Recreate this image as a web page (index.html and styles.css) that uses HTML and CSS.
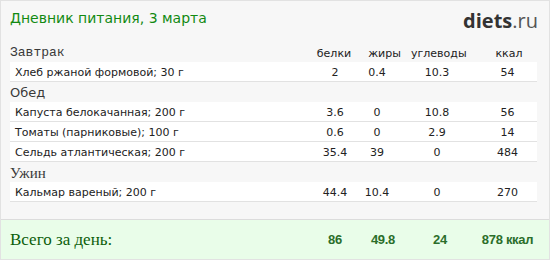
FILE: index.html
```html
<!DOCTYPE html>
<html lang="ru">
<head>
<meta charset="utf-8">
<title>Дневник питания</title>
<link rel="stylesheet" href="styles.css">
</head>
<body>
<div class="card">
  <div class="top">
    <h1 class="title">Дневник питания, 3 марта</h1>
    <div class="logo">diets<span class="logo-ru">.ru</span></div>
  </div>
  <div class="list">
    <div class="sec head">
      <span class="meal meal-b">Завтрак</span>
      <span class="ch">белки</span>
      <span class="ch">жиры</span>
      <span class="ch">углеводы</span>
      <span class="ch ch-k">ккал</span>
    </div>
    <div class="row"><span class="name">Хлеб ржаной формовой; 30 г</span><span>2</span><span>0.4</span><span>10.3</span><span>54</span></div>

    <div class="sec"><span class="meal meal-l">Обед</span></div>
    <div class="row"><span class="name">Капуста белокачанная; 200 г</span><span>3.6</span><span>0</span><span>10.8</span><span>56</span></div>
    <div class="row"><span class="name">Томаты (парниковые); 100 г</span><span>0.6</span><span>0</span><span>2.9</span><span>14</span></div>
    <div class="row"><span class="name">Сельдь атлантическая; 200 г</span><span>35.4</span><span>39</span><span>0</span><span>484</span></div>

    <div class="sec"><span class="meal meal-d">Ужин</span></div>
    <div class="row"><span class="name">Кальмар вареный; 200 г</span><span>44.4</span><span>10.4</span><span>0</span><span>270</span></div>
  </div>
  <div class="total">
    <span class="total-label">Всего за день:</span>
    <span class="tv">86</span>
    <span class="tv">49.8</span>
    <span class="tv">24</span>
    <span class="tv">878 ккал</span>
  </div>
</div>
</body>
</html>
```

FILE: styles.css
```css
body {
  margin: 0;
  background: #ffffff;
}

.card {
  width: 550px;
  height: 260px;
  box-sizing: border-box;
  border: 1px solid #e2e2e2;
  background: #f7f7f7;
  display: flex;
  flex-direction: column;
}

.top {
  display: flex;
  justify-content: space-between;
  align-items: flex-start;
  height: 41px;
  box-sizing: border-box;
  padding: 8px 11px 0 9px;
}

.title {
  margin: 0;
  font: normal 14px/18px "DejaVu Sans", Verdana, sans-serif;
  color: #128a12;
}

.logo {
  font: 700 20px/24px "Open Sans", sans-serif;
  color: #333333;
  margin-top: 0;
}

.logo-ru {
  font-weight: 400;
  color: #555555;
}

.list {
  padding: 0 12px 0 9px;
  flex: 1;
}

.sec {
  height: 20px;
  display: grid;
  grid-template-columns: 1fr 48px 53px 53px 73px;
  align-items: end;
}

.meal {
  color: #3a3a3a;
  line-height: 18px;
}

.meal-b {
  font: 13px/18px "Liberation Mono", "Courier New", monospace;
}

.meal-l {
  font: 13px/18px "DejaVu Sans", Verdana, sans-serif;
}

.meal-d {
  font: 15px/18px "Liberation Serif", "Times New Roman", serif;
}

.ch {
  font: 11px/16px "DejaVu Sans", Verdana, sans-serif;
  color: #222222;
  text-align: center;
}

.ch-k {
  padding-left: 17px;
}

.row {
  height: 16px;
  padding-top: 3px;
  border-bottom: 1px solid #e2e2e2;
  background: #ffffff;
  display: grid;
  grid-template-columns: 1fr 46px 38px 82px 59px;
  align-items: center;
  font: 11px/16px "DejaVu Sans", Verdana, sans-serif;
  color: #222222;
  text-align: center;
}

.row .name {
  text-align: left;
  padding-left: 5px;
}

.total {
  height: 39px;
  border-top: 1px solid #dcdcdc;
  background: #e9fde9;
  display: grid;
  grid-template-columns: 1fr 48px 48px 66px 69px;
  align-items: center;
  padding: 0 7px 0 9px;
}

.total-label {
  font: 17px/20px "Liberation Serif", "Times New Roman", serif;
  color: #0b5e0b;
}

.tv {
  font: 700 13px/20px "Liberation Sans", Arial, sans-serif;
  color: #2b6e2b;
  text-align: center;
  letter-spacing: -0.3px;
}
```
